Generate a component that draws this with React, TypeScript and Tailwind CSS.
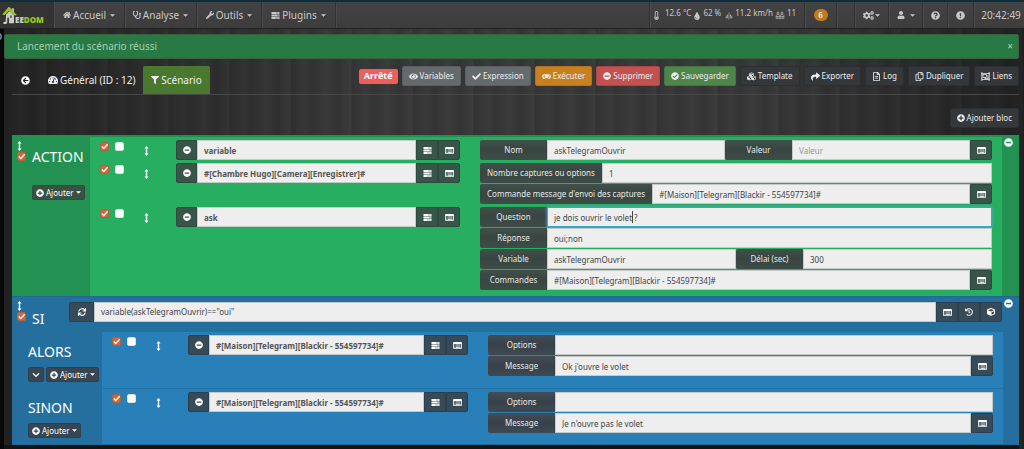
import React, { useId } from "react";
import {
  FaArrowCircleLeft,
  FaCheck,
  FaCheckCircle,
  FaChevronDown,
  FaCogs,
  FaCube,
  FaCubes,
  FaExclamationCircle,
  FaEye,
  FaFilter,
  FaGamepad,
  FaHistory,
  FaHome,
  FaMinusCircle,
  FaPlusCircle,
  FaQuestionCircle,
  FaRegCopy,
  FaRegFileAlt,
  FaRegObjectGroup,
  FaShare,
  FaStethoscope,
  FaSync,
  FaTachometerAlt,
  FaThermometerEmpty,
  FaTint,
  FaUser,
  FaWrench,
} from "react-icons/fa";

type Tone = "green" | "blue";

const toneButton: Record<Tone, string> = {
  green: "bg-[#38554a] border-[#30483f]",
  blue: "bg-[#374a58] border-[#2d3f4c]",
};
const toneLabel: Record<Tone, string> = {
  green: "bg-linear-to-b from-[#40504a] via-[#394540] to-[#3e4d48]",
  blue: "bg-linear-to-b from-[#434d55] via-[#384149] to-[#3e4a53]",
};

const TasksIcon = () => (
  <svg viewBox="0 0 18 14" className="h-[7px] w-[9px]" fill="currentColor" aria-hidden="true">
    <path fillRule="evenodd" d="M1 0h16v4H1zM10 1.4v1.2h5.6V1.4zM1 5h16v4H1zM12.5 6.4v1.2h3.1V6.4zM1 10h16v4H1zM8 11.4v1.2h7.6v-1.2z" />
  </svg>
);

const ListIcon = () => (
  <svg viewBox="0 0 18 14" className="h-[7px] w-[9px]" fill="currentColor" aria-hidden="true">
    <path fillRule="evenodd" d="M2 0h14a2 2 0 0 1 2 2v10a2 2 0 0 1-2 2H2a2 2 0 0 1-2-2V2a2 2 0 0 1 2-2zM1.6 4v8.4h14.8V4z" />
    <path opacity=".8" d="M3 5h2v1.6H3zM6 5h9v1.6H6zM3 7.6h2v1.6H3zM6 7.6h9v1.6H6zM3 10.2h2v1.6H3zM6 10.2h9v1.6H6z" />
  </svg>
);

const MoveIcon = () => (
  <svg viewBox="0 0 10 20" className="h-[10px] w-[5px] text-white" fill="currentColor" aria-hidden="true">
    <path d="M5 0l4 5H6.400v10H9L5 20 1 15h2.600V5H1z" />
  </svg>
);

const WindIcon = () => (
  <svg viewBox="0 0 16 16" className="size-[8px]" fill="none" stroke="currentColor" strokeWidth="1.200" aria-hidden="true">
    <path d="M8 1v14M5 5v7M11 5v7M5 12H2V9l3-2M11 12h3V9l-3-2" />
  </svg>
);

const PeopleIcon = () => (
  <svg viewBox="0 0 20 16" className="h-[8px] w-[10px]" fill="none" stroke="currentColor" strokeWidth="1.300" aria-hidden="true">
    <circle cx="6" cy="4" r="2" />
    <circle cx="14" cy="4" r="2" />
    <path d="M2 10c1-4 7-4 8 0 1-4 7-4 8 0M1 11h18M1 14.500h18M4 11v4M10 11v4M16 11v4" />
  </svg>
);

const Caret = () => (
  <svg viewBox="0 0 8 4" className="h-[3px] w-[5px] shrink-0" fill="currentColor" aria-hidden="true">
    <path d="M0 0h8L4 4z" />
  </svg>
);

const Logo = () => (
  <svg viewBox="0 0 26 34" className="h-[19px] w-[15px]" aria-hidden="true">
    <path d="M17 4h4v8l-4-4z" fill="#b9bcb9" />
    <path d="M7 15l6-6 8 8v14H12V21H9v8c0 3-3 4-7 3v-3c3 0 4 0 4-2z" fill="#c9ccc9" />
    <path d="M1 15L12 2l13 14h-4L12 7l-7 8z" fill="#9bc717" stroke="#9bc717" strokeWidth="1.500" />
    <path d="M14 17h3v4h-3z" fill="#4b4f4b" />
  </svg>
);

function Check({ checked, label }: { checked?: boolean; label: string }) {
  return (
    <span className="relative block size-[9px]">
      <input
        type="checkbox"
        defaultChecked={checked}
        aria-label={label}
        className="peer block size-[9px] appearance-none rounded-[2px] border border-[#d9e3dd] bg-white checked:border-[#a9653f] checked:bg-[#d8623a]"
      />
      <svg viewBox="0 0 10 10" className="pointer-events-none absolute inset-0 hidden size-[9px] peer-checked:block" fill="none" stroke="#fff" strokeWidth="1.500" aria-hidden="true">
        <path d="M2 5l2.200 2.300L8.500 2.500" />
      </svg>
    </span>
  );
}

function Addon({ tone, label, side = "mid", wide, children }: { tone: Tone; label: string; side?: "left" | "mid" | "right"; wide?: boolean; children: React.ReactNode }) {
  const round = side === "left" ? "rounded-l-[2px]" : side === "right" ? "rounded-r-[2px]" : "";
  const width = wide ? "w-[25px]" : side === "left" ? "w-[21px]" : "w-[22px]";
  return (
    <button type="button" aria-label={label} className={`flex h-5 shrink-0 items-center justify-center border text-[8px] text-white ${width} ${round} ${toneButton[tone]}`}>
      {children}
    </button>
  );
}

const inputClass = "block h-5 w-full min-w-0 flex-1 border bg-[#eee] px-[6px] text-[8px] leading-[18px] outline-none placeholder:text-[#999]";

function Field({ tone, label, value, placeholder, auto, active, grow = "flex-1" }: { tone: Tone; label: string; value?: string; placeholder?: string; auto?: boolean; active?: boolean; grow?: string }) {
  const id = useId();
  return (
    <div className={`flex min-w-0 ${grow}`}>
      <label htmlFor={id} className={`flex h-5 shrink-0 items-center justify-center rounded-l-[2px] text-[8px] whitespace-nowrap text-[#e6eae8] ${auto ? "px-[7px]" : "w-[67px]"} ${toneLabel[tone]}`}>
        {label}
      </label>
      <div className="relative flex min-w-0 flex-1">
        <input
          id={id}
          type="text"
          defaultValue={value}
          placeholder={placeholder}
          className={`${inputClass} text-[#3d4448] ${active ? "border-[#35a9cc] shadow-[0_0_3px_#52a8ec]" : "border-[#c4cac7]"}`}
        />
        {active && (
          <span aria-hidden="true" className="pointer-events-none absolute top-[4px] left-[85px] h-3 w-px bg-[#444]" />
        )}
      </div>
    </div>
  );
}

function FieldLine({ children }: { children: React.ReactNode }) {
  return <div className="flex">{children}</div>;
}

const ListButton = ({ tone }: { tone: Tone }) => (
  <Addon tone={tone} side="right" label="Sélectionner une commande">
    <ListIcon />
  </Addon>
);

function ActionRow({ tone, command, children }: { tone: Tone; command: string; children: React.ReactNode }) {
  return (
    <div className="flex items-start">
      <div className="flex w-[86px] shrink-0 items-start pl-[10px]">
        <div className="flex gap-[6px] pt-[2px]">
          <Check checked label={`Activer ${command}`} />
          <Check label={`Exécuter ${command} en parallèle`} />
        </div>
        <div className="pt-[6px] pl-[20px]">
          <MoveIcon />
        </div>
      </div>
      <div className="grid min-w-0 flex-1 grid-cols-[284fr_512fr] items-start gap-x-5">
        <div className="flex">
          <Addon tone={tone} side="left" label="Retirer l'action">
            <FaMinusCircle />
          </Addon>
          <input type="text" aria-label="Action" defaultValue={command} className={`${inputClass} border-[#c4cac7] font-bold text-[#555]`} />
          <Addon tone={tone} label="Sélectionner une action">
            <TasksIcon />
          </Addon>
          <ListButton tone={tone} />
        </div>
        <div className="flex min-w-0 flex-col gap-px">{children}</div>
      </div>
    </div>
  );
}

function AddButton({ tone }: { tone: Tone }) {
  return (
    <button type="button" className={`flex h-[15px] items-center gap-[2px] rounded-[2px] border px-[3px] text-[8px] whitespace-nowrap text-white ${tone === "green" ? "border-[#2f5041] bg-[#385145]" : "border-[#2c4252] bg-[#364652]"}`}>
      <FaPlusCircle />
      <span>Ajouter</span>
      <Caret />
    </button>
  );
}

function NavItem({ icon, text, className }: { icon: React.ReactNode; text: string; className: string }) {
  return (
    <a href="#" className={`flex h-full items-center justify-center gap-[2px] border-l border-[#323232] shadow-[inset_1px_0_0_#4b4b4b] ${className}`}>
      <span className="text-[8px]">{icon}</span>
      <span className="mr-[2px]">{text}</span>
      <Caret />
    </a>
  );
}

function ToolButton({ icon, text, color = "bg-[#35383a] border-[#2c2f31]" }: { icon: React.ReactNode; text: string; color?: string }) {
  return (
    <button type="button" className={`flex h-5 shrink-0 items-center gap-[2px] rounded-[2px] border px-[6px] text-[8px] whitespace-nowrap text-[#ececec] ${color}`}>
      <span className="text-[9px]">{icon}</span>
      <span>{text}</span>
    </button>
  );
}

const navCell = "flex h-full items-center justify-center border-l border-[#323232] shadow-[inset_1px_0_0_#4b4b4b]";

function NavBar() {
  return (
    <nav className="flex h-[29px] items-center border-t-2 border-b border-t-[#0d2d40] border-b-[#222] bg-linear-to-b from-[#434343] to-[#3d3d3d] text-[10px] text-[#c8c8c8]">
      <a href="#" aria-label="Jeedom" className="flex h-full w-[53px] shrink-0 items-center bg-[#333] pl-[2px]">
        <Logo />
        <span className="-ml-[2px] pt-[10px] text-[8px] leading-[8px] font-black text-[#c9ccc9]">
          EE<span className="text-[#9bc717]">DOM</span>
        </span>
      </a>
      <NavItem className="w-[71px]" icon={<FaHome />} text="Accueil" />
      <NavItem className="w-[72px]" icon={<FaStethoscope />} text="Analyse" />
      <NavItem className="w-[65px]" icon={<FaWrench />} text="Outils" />
      <NavItem className="w-[74px]" icon={<TasksIcon />} text="Plugins" />
      <div className="h-full flex-1 border-l border-[#323232] shadow-[inset_1px_0_0_#4b4b4b]" />
      <div className={`${navCell} w-[155px] gap-[2px] pr-[6px] pb-[2px] text-[8px] whitespace-nowrap`}>
        <FaThermometerEmpty className="mt-[3px] mr-[2px] shrink-0 text-[9px]" />
        <span className="pb-[3px]">12.6 °C</span>
        <FaTint className="mt-[3px] shrink-0" />
        <span className="pb-[3px]">62 %</span>
        <span className="mt-[3px] ml-[2px] shrink-0"><WindIcon /></span>
        <span className="pb-[3px]">11.2 km/h</span>
        <span className="mt-[2px] shrink-0"><PeopleIcon /></span>
        <span className="pb-[3px]">11</span>
      </div>
      <div className={`${navCell} w-8`}>
        <span className="flex h-3 w-[14px] items-center justify-center rounded-full bg-[#c27c1e] text-[8px] font-bold text-[#ddd]">6</span>
      </div>
      <div className={`${navCell} w-[18px]`} />
      <button type="button" aria-label="Réglages" className={`${navCell} w-[34px] gap-px`}>
        <FaCogs className="text-[11px]" />
        <Caret />
      </button>
      <button type="button" aria-label="Utilisateur" className={`${navCell} w-[34px] gap-[5px]`}>
        <FaUser className="text-[8px]" />
        <Caret />
      </button>
      <button type="button" aria-label="Aide" className={`${navCell} w-[25px] text-[9px]`}>
        <FaQuestionCircle />
      </button>
      <button type="button" aria-label="Signaler" className={`${navCell} w-[26px] text-[9px]`}>
        <FaExclamationCircle />
      </button>
      <time className={`${navCell} w-[51px] pl-1 text-[10px]`}>20:42:49</time>
    </nav>
  );
}

function CollapseButton() {
  return (
    <button type="button" aria-label="Réduire le bloc" className="text-[9px] text-white">
      <FaMinusCircle />
    </button>
  );
}

function BlockHandle({ label }: { label: string }) {
  return (
    <div className="flex w-[20px] shrink-0 flex-col items-start gap-px pt-[4px] pl-[5px]">
      <MoveIcon />
      <Check checked label={label} />
    </div>
  );
}

export default function App() {
  return (
    <div className="min-h-screen bg-[#323232] bg-[linear-gradient(90deg,rgba(0,0,0,.32),rgba(255,255,255,.02)_35%,rgba(255,255,255,.02)_75%,rgba(0,0,0,.35)),repeating-linear-gradient(90deg,rgba(255,255,255,.02)_0px,rgba(0,0,0,.04)_7px,rgba(255,255,255,.02)_19px,rgba(255,255,255,.03)_20px,rgba(0,0,0,.05)_33px,rgba(255,255,255,.03)_46px,rgba(0,0,0,.06)_47px,rgba(255,255,255,.02)_61px)] font-['Noto_Sans','Liberation_Sans',sans-serif]">
      <NavBar />
      <div className="flex">
        <aside className="flex w-1 shrink-0 justify-end overflow-hidden bg-[#080808] pt-[2px] pr-[2px] text-[9px] leading-[12px] text-[#c8c8c8]">O</aside>
        <main className="min-w-0 flex-1 pt-[5px] pr-[5px]">
          <div role="alert" className="flex h-[25px] items-center justify-between rounded-[2px] border border-[#39603d] bg-[#297944] pr-[5px] pl-[12px] text-[10px] text-[#a5cdb1]">
            <span>Lancement du scénario réussi</span>
            <button type="button" aria-label="Fermer" className="text-[10px] text-[#b5d5be]">×</button>
          </div>

          <div className="mt-[7px] ml-2 flex items-start justify-between border-b border-[#474747]">
            <div className="flex h-7 items-center text-[10px] text-white">
              <a href="#" aria-label="Retour" className="flex w-[27px] pl-[9px] text-[9px]">
                <FaArrowCircleLeft />
              </a>
              <a href="#" className="flex w-[104px] items-center gap-[2px] pl-[9px] whitespace-nowrap text-[#eee]">
                <FaTachometerAlt className="text-[10px]" />
                Général (ID : 12)
              </a>
              <a href="#" className="flex h-7 w-[67px] items-center justify-center gap-[2px] rounded-t-[2px] bg-[#4a782e] text-[#eee]">
                <FaFilter className="text-[8px]" />
                Scénario
              </a>
            </div>
            <div className="flex items-center gap-1">
              <span className="flex h-[15px] items-center rounded-[2px] bg-[#ee5f5b] px-[5px] text-[9px] font-bold text-white">Arrêté</span>
              <ToolButton icon={<FaEye />} text="Variables" color="bg-[#656a6c] border-[#5a5f61]" />
              <ToolButton icon={<FaCheck />} text="Expression" color="bg-[#656a6c] border-[#5a5f61]" />
              <ToolButton icon={<FaGamepad />} text="Exécuter" color="bg-[#c8801f] border-[#b3731d]" />
              <ToolButton icon={<FaMinusCircle className="text-[8px]" />} text="Supprimer" color="bg-[#c25150] border-[#a94746]" />
              <ToolButton icon={<FaCheckCircle className="text-[8px]" />} text="Sauvegarder" color="bg-[#4d854b] border-[#437541]" />
              <ToolButton icon={<FaCubes />} text="Template" />
              <ToolButton icon={<FaShare />} text="Exporter" />
              <ToolButton icon={<FaRegFileAlt />} text="Log" />
              <ToolButton icon={<FaRegCopy />} text="Dupliquer" />
              <ToolButton icon={<FaRegObjectGroup />} text="Liens" />
            </div>
          </div>

          <div className="mt-[13px] flex justify-end">
            <ToolButton icon={<FaPlusCircle className="text-[8px]" />} text="Ajouter bloc" />
          </div>

          <section className="mt-[7px] ml-2 flex border-t-2 border-[#219150] bg-[#27ae60]">
            <div className="flex w-[78px] shrink-0 bg-[#239151]">
              <BlockHandle label="Activer le bloc ACTION" />
              <div className="pt-[10px]">
                <h2 className="text-[14px] leading-[20px] text-white">ACTION</h2>
                <div className="mt-[18px]">
                  <AddButton tone="green" />
                </div>
              </div>
            </div>
            <div className="flex min-w-0 flex-1 flex-col gap-[3px] pt-[3px] pr-[10px] pb-[6px]">
              <ActionRow tone="green" command="variable">
                <FieldLine>
                  <Field tone="green" grow="flex-[245]" label="Nom" value="askTelegramOuvrir" />
                  <div className="flex min-w-0 flex-[267]">
                    <Field tone="green" label="Valeur" placeholder="Valeur" />
                    <ListButton tone="green" />
                  </div>
                </FieldLine>
              </ActionRow>
              <ActionRow tone="green" command="#[Chambre Hugo][Camera][Enregistrer]#">
                <FieldLine>
                  <Field auto tone="green" label="Nombre captures ou options" value="1" />
                </FieldLine>
                <FieldLine>
                  <Field auto tone="green" label="Commande message d'envoi des captures" value="#[Maison][Telegram][Blackir - 554597734]#" />
                  <ListButton tone="green" />
                </FieldLine>
              </ActionRow>
              <ActionRow tone="green" command="ask">
                <FieldLine>
                  <Field active tone="green" label="Question" value="je dois ouvrir le volet ?" />
                </FieldLine>
                <FieldLine>
                  <Field tone="green" label="Réponse" value="oui;non" />
                </FieldLine>
                <FieldLine>
                  <Field tone="green" label="Variable" value="askTelegramOuvrir" />
                  <Field tone="green" label="Délai (sec)" value="300" />
                </FieldLine>
                <FieldLine>
                  <Field tone="green" label="Commandes" value="#[Maison][Telegram][Blackir - 554597734]#" />
                  <ListButton tone="green" />
                </FieldLine>
              </ActionRow>
            </div>
            <div className="flex w-[17px] shrink-0 items-start justify-start bg-[#239151] pt-[1px] pl-[2px]">
              <CollapseButton />
            </div>
          </section>

          <section className="ml-2 border-y border-[#216898] bg-[#256f9f]">
            <div className="flex h-[35px] items-start">
              <BlockHandle label="Activer le bloc SI" />
              <h2 className="w-[37px] shrink-0 pt-[12px] text-[14px] leading-[20px] text-white">SI</h2>
              <div className="flex min-w-0 flex-1 pt-[5px]">
                <Addon tone="blue" side="left" wide label="Vérifier la condition">
                  <FaSync />
                </Addon>
                <textarea rows={1} aria-label="Condition" defaultValue={'variable(askTelegramOuvrir)=="oui"'} className={`${inputClass} resize-none overflow-hidden border-[#c4cac7] text-[#3d4448]`} />
                <Addon tone="blue" label="Sélectionner une commande">
                  <ListIcon />
                </Addon>
                <Addon tone="blue" label="Répétition">
                  <FaHistory />
                </Addon>
                <Addon tone="blue" side="right" label="Sélectionner un équipement">
                  <FaCube />
                </Addon>
              </div>
              <div className="flex w-[17px] shrink-0 justify-start pt-[2px] pl-[2px]">
                <CollapseButton />
              </div>
            </div>
            <div className="mr-4 flex h-14">
              <div className="w-[90px] shrink-0 pt-[10px] pl-4">
                <h3 className="text-[14px] leading-[20px] text-white">ALORS</h3>
                <div className="mt-[5px] flex gap-[2px]">
                  <button type="button" aria-label="Replier" className="flex h-[15px] w-4 shrink-0 items-center justify-center rounded-[2px] border border-[#2c4252] bg-[#364652] text-[8px] text-white">
                    <FaChevronDown />
                  </button>
                  <AddButton tone="blue" />
                </div>
              </div>
              <div className="min-w-0 flex-1 bg-[#2980b9] pt-[3px] pr-[10px]">
                <ActionRow tone="blue" command="#[Maison][Telegram][Blackir - 554597734]#">
                  <FieldLine>
                    <Field tone="blue" label="Options" />
                  </FieldLine>
                  <FieldLine>
                    <Field tone="blue" label="Message" value="Ok j'ouvre le volet" />
                    <ListButton tone="blue" />
                  </FieldLine>
                </ActionRow>
              </div>
            </div>
            <div className="mr-4 flex h-14">
              <div className="w-[90px] shrink-0 pt-[10px] pl-4">
                <h3 className="text-[14px] leading-[20px] text-white">SINON</h3>
                <div className="mt-[5px] flex">
                  <AddButton tone="blue" />
                </div>
              </div>
              <div className="min-w-0 flex-1 border-t border-[#2574a8] bg-[#2980b9] pt-[3px] pr-[10px]">
                <ActionRow tone="blue" command="#[Maison][Telegram][Blackir - 554597734]#">
                  <FieldLine>
                    <Field tone="blue" label="Options" />
                  </FieldLine>
                  <FieldLine>
                    <Field tone="blue" label="Message" value="Je n'ouvre pas le volet" />
                    <ListButton tone="blue" />
                  </FieldLine>
                </ActionRow>
              </div>
            </div>
          </section>
          <div className="h-1 bg-[#131515]" />
        </main>
      </div>
    </div>
  );
}
